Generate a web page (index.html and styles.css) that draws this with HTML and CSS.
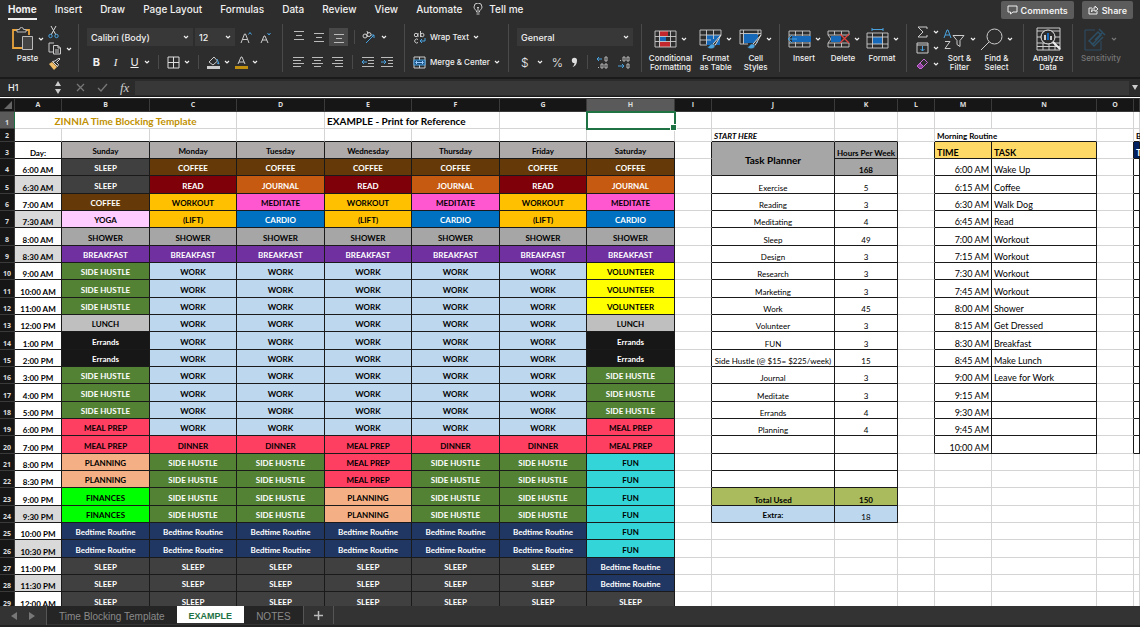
FILE: index.html
```html
<!DOCTYPE html>
<html lang="en">
<head>
  <meta charset="UTF-8">
  <meta name="viewport" content="width=device-width, initial-scale=1.0">
  <title>Time Blocking Template</title>
  <link rel="stylesheet" href="styles.css">
</head>
<body>

  <!-- Shared icons -->
  <svg class="sprite" width="0" height="0">
    <symbol id="chev" viewBox="0 0 6 4"><path d="M1 1l2 2 2-2" fill="none" stroke="currentColor" stroke-width="1.2"/></symbol>
    <symbol id="brush" viewBox="0 0 16 16"><path d="M15 1L7 10l2 1.500z" fill="#2d2d2d" stroke="#ddd"/><path d="M7 10c-3-1-3 3-6 3 3 3 8 2 8-1.500z" fill="#4aa3df" stroke="#2d2d2d" stroke-width=".5"/></symbol>
  </svg>

  <!-- Ribbon tabs -->
  <div class="menu">
    <nav class="menu-tabs">
      <a href="#" class="active">Home</a>
      <a href="#">Insert</a>
      <a href="#">Draw</a>
      <a href="#">Page Layout</a>
      <a href="#">Formulas</a>
      <a href="#">Data</a>
      <a href="#">Review</a>
      <a href="#">View</a>
      <a href="#">Automate</a>
    </nav>
    <button class="tell-me">
      <svg width="10" height="12" viewBox="0 0 10 12" fill="none" stroke="#ddd" stroke-width=".9"><path d="M3.500 9V8C3 7 1 6 1 4a4 4 0 0 1 8 0c0 2-2 3-2.500 4v1zM3.500 11h3M5 8V5M4 4l1 1 1-1"/></svg>
      Tell me
    </button>
    <div class="menu-actions">
      <button><svg width="11" height="10" viewBox="0 0 11 10" fill="none" stroke="#eee"><path d="M1 1h9v6H6L3.500 9V7H1z"/></svg>Comments</button>
      <button><svg width="11" height="10" viewBox="0 0 11 10" fill="none" stroke="#eee"><path d="M4 3H1v6h8V6M3.500 7c0-3 1-4 3.500-4V1l3 3-3 2.500V5C5.500 5 4.500 5 3.500 7z"/></svg>Share</button>
    </div>
  </div>

  <!-- Ribbon -->
  <div class="ribbon">
    <div class="group clipboard">
      <button class="big">
        <span class="icon-row">
          <svg width="23" height="24" viewBox="0 0 23 24" fill="none"><path d="M6 3H2v18h9M15 3h3v5" stroke="#e8a33d" stroke-width="1.800"/><path d="M6 5V2.500h2.500a2 2 0 0 1 4 0H15V5z" stroke="#bbb" fill="#2d2d2d"/><path d="M11.500 9.500h10v13h-10z" fill="#444" stroke="#bbb"/></svg>
          <svg class="chev"><use href="#chev"/></svg>
        </span>
        Paste
      </button>
      <div class="stack">
        <button aria-label="Cut"><svg width="12" height="13" viewBox="0 0 12 13" fill="none"><path d="M3 0l5 9M8 0L3 9" stroke="#ddd"/><circle cx="2.500" cy="10" r="1.700" stroke="#4aa3df"/><circle cx="8.500" cy="10" r="1.700" stroke="#4aa3df"/></svg></button>
        <button aria-label="Copy"><svg width="14" height="13" viewBox="0 0 14 13" fill="#2d2d2d" stroke="#ccc"><path d="M6 1H1v9h5"/><path d="M5.500 3.500H10l2.500 2.500v6h-7zM10 3.500V6h2.500M7 8h4M7 10h4"/></svg><svg class="chev"><use href="#chev"/></svg></button>
        <button aria-label="Format painter"><svg width="13" height="12" viewBox="0 0 13 12"><path d="M1 6l3-2 5 5-3 3z" fill="#efbd68"/><path d="M4.500 3.500l5 5 1-2L8.500 4.500 12 1l-1-1-4 3z" fill="none" stroke="#ddd"/></svg></button>
      </div>
    </div>

    <div class="group rows">
      <div class="row">
        <label class="field font-name"><select aria-label="Font"><option>Calibri (Body)</option></select><svg class="chev"><use href="#chev"/></svg></label>
        <label class="field font-size"><select aria-label="Font size"><option>12</option></select><svg class="chev"><use href="#chev"/></svg></label>
        <button class="grow" aria-label="Increase font size"><svg width="13" height="13" viewBox="0 0 13 13" fill="none" stroke="#ccc"><path d="M1 12L4.500 3h1L9 12M2.500 8.500h5"/><path d="M8.500 3.500l1.500-2 1.500 2" stroke="#4aa3df"/></svg></button>
        <button aria-label="Decrease font size"><svg width="13" height="13" viewBox="0 0 13 13" fill="none" stroke="#ccc"><path d="M2 12l3-7h1l3 7M3 9h5"/><path d="M8.500 2l1.500 2 1.500-2" stroke="#4aa3df"/></svg></button>
      </div>
      <div class="row font-style">
        <button class="letter b">B</button>
        <button class="letter i">I</button>
        <button class="letter u">U</button>
        <svg class="chev"><use href="#chev"/></svg>
        <span class="sep"></span>
        <button aria-label="Borders"><svg width="13" height="13" viewBox="0 0 13 13" fill="none" stroke="#ddd"><path d="M1 1h11v11H1zM6.500 1v11M1 6.500h11"/></svg><svg class="chev"><use href="#chev"/></svg></button>
        <span class="sep"></span>
        <button aria-label="Fill color"><svg width="13" height="13" viewBox="0 0 13 13" fill="none"><path d="M2 6l5-5 3.500 4-4.500 4z" stroke="#ccc"/><path d="M10 3l2 5-2-1" stroke="#4aa3df"/><path d="M0 10h13v3H0z" fill="#ccc"/></svg><svg class="chev"><use href="#chev"/></svg></button>
        <button class="font-color" aria-label="Font color"><svg width="13" height="13" viewBox="0 0 13 13" fill="none"><path d="M3 8l3-7h1l3 7M4 6h5" stroke="#ccc"/><path d="M0 10h13v3H0z" fill="#c08f10"/></svg><svg class="chev"><use href="#chev"/></svg></button>
      </div>
    </div>

    <div class="group rows align">
      <div class="row">
        <button aria-label="Top align"><svg width="12" height="12" viewBox="0 0 12 12" stroke="#bbb"><path d="M1 .5h10M3 4.500h6M1 8.500h10"/></svg></button>
        <button aria-label="Middle align"><svg width="12" height="12" viewBox="0 0 12 12" stroke="#bbb"><path d="M1 2.500h10M3 6.500h6M1 10.500h10"/></svg></button>
        <button class="on" aria-label="Bottom align"><svg width="12" height="12" viewBox="0 0 12 12" stroke="#bbb"><path d="M1 3.500h10M3 7.500h6M1 11.500h10"/></svg></button>
        <span class="sep"></span>
        <button class="wide" aria-label="Orientation"><svg width="14" height="13" viewBox="0 0 14 13" fill="none"><path d="M4 12l8-8M9 4h3v3" stroke="#4aa3df"/><circle cx="3" cy="5" r="2" stroke="#ccc"/><circle cx="7" cy="3.500" r="2" stroke="#ccc"/><path d="M4 3l2 3M5 0l1 3" stroke="#ccc"/></svg><svg class="chev"><use href="#chev"/></svg></button>
      </div>
      <div class="row">
        <button aria-label="Align left"><svg width="12" height="12" viewBox="0 0 12 12" stroke="#bbb"><path d="M1 1.500h11M1 4.500h8M1 7.500h11M1 10.500h8"/></svg></button>
        <button aria-label="Center"><svg width="12" height="12" viewBox="0 0 12 12" stroke="#bbb"><path d="M1 1.500h11M3 4.500h7M1 7.500h11M3 10.500h7"/></svg></button>
        <button aria-label="Align right"><svg width="12" height="12" viewBox="0 0 12 12" stroke="#bbb"><path d="M1 1.500h11M4 4.500h8M1 7.500h11M4 10.500h8"/></svg></button>
        <span class="sep"></span>
        <button aria-label="Decrease indent"><svg width="12" height="12" viewBox="0 0 12 12" fill="none" stroke="#bbb"><path d="M0 1.500h12M6 4.500h6M6 7.500h6M0 10.500h12"/><path d="M5 6H0M2 4L0 6l2 2" stroke="#4aa3df"/></svg></button>
        <button aria-label="Increase indent"><svg width="12" height="12" viewBox="0 0 12 12" fill="none" stroke="#bbb"><path d="M0 1.500h12M7 4.500h5M7 7.500h5M0 10.500h12"/><path d="M0 6h5M3 4l2 2-2 2" stroke="#4aa3df"/></svg></button>
      </div>
    </div>

    <div class="group rows wrap">
      <div class="row"><button><svg width="13" height="13" viewBox="0 0 13 13" fill="none" stroke="#ccc"><circle cx="3" cy="4" r="1.700"/><path d="M5 2v4M7.500 0v6M5 8.500a2 2 0 1 0 0 3"/><circle cx="9.300" cy="4" r="1.700"/><path d="M12 7v3H7M9 8l-2 2 2 2" stroke="#4aa3df"/></svg>Wrap Text<svg class="chev"><use href="#chev"/></svg></button></div>
      <div class="row"><button><svg width="13" height="13" viewBox="0 0 13 13" fill="none"><path d="M1 1h11v11H1zM6.500 1v11" stroke="#ccc"/><path d="M1 4h11v5H1z" fill="#1a4a78" stroke="#4aa3df"/><path d="M3 6.500h7M4 5L2.500 6.500 4 8M9 5l1.500 1.500L9 8" stroke="#9cf"/></svg>Merge &amp; Center<svg class="chev"><use href="#chev"/></svg></button></div>
    </div>

    <div class="group rows number">
      <div class="row">
        <label class="field"><select aria-label="Number format"><option>General</option></select><svg class="chev"><use href="#chev"/></svg></label>
      </div>
      <div class="row">
        <button class="sign">$</button>
        <svg class="chev"><use href="#chev"/></svg>
        <button class="sign">%</button>
        <button class="comma" aria-label="Comma style"><svg width="7" height="11" viewBox="0 0 7 11"><path d="M6 3.500C6 7 4 9.500 1.500 10 3 8.500 3.500 7 3.500 6A2.600 2.600 0 1 1 6 3.500z" fill="#ddd"/></svg></button>
        <span class="sep"></span>
        <button aria-label="Increase decimal"><svg width="13" height="13" viewBox="0 0 13 13" fill="none"><path d="M6 3H1M3 1L1 3l2 2" stroke="#4aa3df"/><path d="M9 1h2v4H9zM5 8h2v4H5zM9 8h2v4H9zM2 11.500h1" stroke="#bbb"/></svg></button>
        <button aria-label="Decrease decimal"><svg width="13" height="13" viewBox="0 0 13 13" fill="none"><path d="M0 10h6M4 8l2 2-2 2" stroke="#4aa3df"/><path d="M5 1h2v4H5zM9 1h2v4H9zM9 8h2v4H9zM2 4.500h1" stroke="#bbb"/></svg></button>
      </div>
    </div>

    <div class="group bigs styles">
      <button class="big">
        <span class="icon-row"><svg width="23" height="18" viewBox="0 0 23 18" fill="none"><path d="M5 1h9v5H5zM5 12h11v5H5z" fill="#c1272d"/><path d="M5 6h7v6H5z" fill="#1668b8"/><path d="M1 1h21v16H1zM1 6.500h21M1 11.500h21M5.500 1v16M16.500 1v16" stroke="#ccc" stroke-width=".9"/></svg><svg class="chev"><use href="#chev"/></svg></span>
        Conditional<br>Formatting
      </button>
      <button class="big">
        <span class="icon-row"><svg width="23" height="20" viewBox="0 0 23 20" fill="none"><path d="M7 6h14v10H7z" fill="#1668b8"/><path d="M22 6V1H1v15h7M1 6h21M1 11h11M7.500 1v14M14.500 1v9" stroke="#ccc" stroke-width=".9"/><use href="#brush" x="7" y="5" width="16" height="16"/></svg><svg class="chev"><use href="#chev"/></svg></span>
        Format<br>as Table
      </button>
      <button class="big">
        <span class="icon-row"><svg width="23" height="20" viewBox="0 0 23 20" fill="none"><path d="M4 5h15v9H4z" fill="#1668b8"/><path d="M22 6V1H1v14h8M1 4.500h21M4.500 1v14M19 1v5" stroke="#ccc" stroke-width=".9"/><use href="#brush" x="7" y="5" width="16" height="16"/></svg><svg class="chev"><use href="#chev"/></svg></span>
        Cell<br>Styles
      </button>
    </div>

    <div class="group bigs cells">
      <button class="big">
        <span class="icon-row"><svg width="23" height="18" viewBox="0 0 23 18" fill="none"><path d="M1 1h21v16H1zM1 5h21M1 13h21M7.500 1v16M14.500 1v16" stroke="#ccc" stroke-width=".9"/><path d="M4 6h19v6H4z" fill="#1668b8"/><path d="M9 9H1M4 5L0 9l4 4" stroke="#4aa3df"/></svg><svg class="chev"><use href="#chev"/></svg></span>
        Insert
      </button>
      <button class="big">
        <span class="icon-row"><svg width="23" height="18" viewBox="0 0 23 18" fill="none"><path d="M22 5V1H1v4h21M1 13h21v4H1v-4M7.500 1v4M14.500 1v4M7.500 13v4M14.500 13v4M1 5l3 4-3 4" stroke="#ccc" stroke-width=".9"/><path d="M4 6h10v6H4z" fill="#1668b8"/><path d="M13 4l9 9M22 4l-9 9" stroke="#e0433f" stroke-width="1.300"/></svg><svg class="chev"><use href="#chev"/></svg></span>
        Delete
      </button>
      <button class="big">
        <span class="icon-row"><svg width="23" height="22" viewBox="0 0 23 22" fill="none"><path d="M6 1.500h11M6 0v3M17 0v3" stroke="#4aa3df"/><path d="M7 9h9v7H7z" fill="#1668b8"/><path d="M1 5h21v15H1zM1 9h21M1 16h21M6.500 5v15M16.500 5v15" stroke="#ccc" stroke-width=".9"/></svg><svg class="chev"><use href="#chev"/></svg></span>
        Format
      </button>
    </div>

    <div class="group editing">
      <div class="stack">
        <button aria-label="AutoSum"><svg width="13" height="12" viewBox="0 0 13 12" fill="none" stroke="#ccc"><path d="M11 3V1H2l5 5-5 5h9V9"/></svg><svg class="chev"><use href="#chev"/></svg></button>
        <button aria-label="Fill"><svg width="13" height="12" viewBox="0 0 13 12" fill="none"><path d="M1 1h11v10H1zM1 3h11" stroke="#ccc"/><path d="M6.500 4v5M4.500 7l2 2 2-2" stroke="#4aa3df"/></svg><svg class="chev"><use href="#chev"/></svg></button>
        <button aria-label="Clear"><svg width="13" height="12" viewBox="0 0 13 12" fill="none" stroke="#c76bd6"><path d="M1 8l7-7 3.500 3.500-6 6H3.500z"/><path d="M4 5l3.500 3.500L5.500 10.500h-2L1 8z" fill="#8e3f9c"/></svg><svg class="chev"><use href="#chev"/></svg></button>
      </div>
      <button class="big">
        <span class="icon-row"><svg width="23" height="22" viewBox="0 0 23 22" fill="none"><path d="M1 10l3-8h1l3 8M2 7h5" stroke="#4aa3df"/><path d="M2 13.500h5L2 20.500h5.500M10 7.500h11l-4 5v6l-3-2v-4z" stroke="#ccc"/></svg><svg class="chev"><use href="#chev"/></svg></span>
        Sort &amp;<br>Filter
      </button>
      <button class="big">
        <span class="icon-row"><svg width="23" height="23" viewBox="0 0 23 23" fill="none" stroke="#ccc"><circle cx="14.500" cy="8.500" r="7.500"/><path d="M9 14l-8 8"/></svg><svg class="chev"><use href="#chev"/></svg></span>
        Find &amp;<br>Select
      </button>
    </div>

    <div class="group bigs analyze">
      <button class="big">
        <span class="icon-row"><svg width="25" height="24" viewBox="0 0 25 24" fill="none"><path d="M1 1h23v22H1zM1 4h23M1 16h23M1 19.500h23M1 10h23M7 16v7M13 16v7M19 16v7" stroke="#ccc"/><circle cx="12" cy="10" r="7" fill="#2d2d2d" stroke="#eee"/><path d="M8 8h2v5H8z" fill="#ccc"/><path d="M11 6h2v7h-2z" fill="#1668b8"/><path d="M14 9h2v4h-2z" fill="#ccc"/><path d="M17 15l7 7" stroke="#eee" stroke-width="2"/></svg></span>
        Analyze<br>Data
      </button>
    </div>

    <div class="group sensitivity">
      <button class="big" disabled>
        <span class="icon-row"><svg width="23" height="24" viewBox="0 0 23 24" fill="none" stroke="#2c4f66"><path d="M11 3H1v20h16V14"/><path d="M5 14l9-9 3 3-8 9zM11 13l8-8M15 2l6 6M7 16l3 3 9-9" stroke-width="1.500"/></svg><svg class="chev"><use href="#chev"/></svg></span>
        Sensitivity
      </button>
    </div>
  </div>

  <!-- Formula bar -->
  <div class="formula-bar">
    <input class="name-box" type="text" value="H1" aria-label="Name box">
    <svg width="6" height="13" viewBox="0 0 6 13" fill="#ccc"><path d="M3 0l3 5H0zM3 13l3-5H0z"/></svg>
    <div class="formula-buttons">
      <button aria-label="Cancel"><svg width="9" height="9" viewBox="0 0 9 9" stroke="#777" stroke-width="1.300"><path d="M1 1l7 7M8 1L1 8"/></svg></button>
      <button aria-label="Enter"><svg width="11" height="9" viewBox="0 0 11 9" fill="none" stroke="#777" stroke-width="1.300"><path d="M1 5l3 3 6-7"/></svg></button>
      <button class="fx">fx</button>
    </div>
    <input class="formula" type="text" aria-label="Formula">
    <button class="expand" aria-label="Expand formula bar"><svg width="6" height="5" viewBox="0 0 6 5" fill="#ccc"><path d="M0 0h6L3 5z"/></svg></button>
  </div>

  <!-- Sheet, filled in by script.js -->
  <div class="sheet">
    <table>
      <colgroup>
        <col class="col-num"><col class="col-a">
        <col class="col-day"><col class="col-day-alt"><col class="col-day"><col class="col-day-alt"><col class="col-day"><col class="col-day-alt"><col class="col-day">
        <col class="col-gap"><col class="col-j"><col class="col-k"><col class="col-gap">
        <col class="col-m"><col class="col-n"><col class="col-gap"><col>
      </colgroup>
      <thead></thead>
      <tbody></tbody>
    </table>
  </div>

  <!-- Sheet tabs -->
  <div class="sheet-tabs">
    <div class="arrows">
      <button aria-label="Previous sheet"><svg width="6" height="8" viewBox="0 0 6 8" fill="#777"><path d="M6 0v8L0 4z"/></svg></button>
      <button aria-label="Next sheet"><svg width="6" height="8" viewBox="0 0 6 8" fill="#777"><path d="M0 0v8l6-4z"/></svg></button>
    </div>
    <button class="sheet-tab">Time Blocking Template</button>
    <button class="sheet-tab active">EXAMPLE</button>
    <button class="sheet-tab">NOTES</button>
    <button class="add" aria-label="Add sheet"><svg width="9" height="9" viewBox="0 0 9 9" stroke="#bbb" stroke-width="1.500"><path d="M4.500 0v9M0 4.500h9"/></svg></button>
  </div>

  <script src="script.js"></script>
</body>
</html>
```
FILE: styles.css
```css
/* Basic styling */
* {
  box-sizing: border-box;
}
body {
  margin: 0;
  height: 100vh;
  display: flex;
  flex-direction: column;
  overflow: hidden;
  background-color: #2d2d2d;
  color: #f0f0f0;
  font-family: Inter, sans-serif;
  font-size: 8px;
}
button, select, input {
  font: inherit;
  color: inherit;
  background: none;
  border: none;
  padding: 0;
  margin: 0;
  outline: none;
}
svg {
  display: block;
  flex: none;
}
.sprite {
  position: absolute;
}
.chev {
  width: 6px;
  height: 4px;
}

/* Ribbon tabs */
.menu {
  display: flex;
  align-items: flex-start;
  height: 21px;
  padding: 0 7px 0 8px;
  font-size: 10px;
  font-weight: 500;
}
.menu-tabs {
  display: flex;
  gap: 18px;
}
.menu-tabs a {
  color: #f0f0f0;
  text-decoration: none;
  line-height: 18px;
  border-bottom: 2px solid transparent;
}
.menu-tabs a.active {
  font-weight: 700;
  border-color: #f0f0f0;
}
.tell-me {
  display: flex;
  align-items: center;
  gap: 6px;
  margin-left: 11px;
  line-height: 18px;
}
.menu-actions {
  display: flex;
  gap: 8px;
  margin-left: auto;
  padding-top: 1px;
}
.menu-actions button {
  display: flex;
  align-items: center;
  gap: 3px;
  height: 18px;
  padding: 0 6px;
  border-radius: 2px;
  background-color: #5c5c5c;
  font-size: 9px;
  font-weight: 600;
}

/* Ribbon */
.ribbon {
  display: grid;
  grid-template-columns: 79px 204px 122px 104px 133px 138px 127px 117px 49px 1fr;
  height: 56px;
  padding: 3px 0 6px;
  flex: none;
}
.group {
  display: flex;
  border-right: 1px solid #4a4a4a;
}
.group:last-child {
  border-right: none;
}
.ribbon button {
  display: flex;
  align-items: center;
  justify-content: center;
}
.ribbon .big {
  flex-direction: column;
  justify-content: flex-start;
  font-size: 8px;
  font-weight: 500;
  line-height: 9px;
}
.icon-row {
  display: flex;
  align-items: center;
  gap: 4px;
  height: 30px;
}
.big:disabled {
  color: #777;
}
.stack {
  display: flex;
  flex-direction: column;
  justify-content: space-between;
  padding: 2px 0;
}
.ribbon .stack button {
  justify-content: flex-start;
  gap: 4px;
}
.rows {
  flex-direction: column;
  justify-content: space-between;
  padding: 4px 8px 1px;
}
.row {
  display: flex;
  align-items: center;
  height: 18px;
}
.sep {
  width: 1px;
  height: 14px;
  background-color: #4a4a4a;
}
.field {
  display: flex;
  align-items: center;
  height: 18px;
  padding: 0 4px;
  background-color: #383838;
  font-size: 9px;
  font-weight: 500;
}
.field select {
  flex: 1;
  min-width: 0;
  appearance: none;
}

.clipboard {
  gap: 4px;
  padding-left: 11px;
}
.font-name {
  width: 106px;
  margin-right: 2px;
}
.font-size {
  width: 40px;
}
.grow {
  margin: 0 6px 0 5px;
}
.font-style button {
  gap: 4px;
}
.letter {
  width: 19px;
  font-size: 11px;
}
.font-style .sep {
  margin: 0 8px;
}
.font-color {
  margin-left: 5px;
}
.b {
  font-weight: 700;
}
.i {
  font-family: "Liberation Serif", serif;
  font-style: italic;
}
.u {
  text-decoration: underline;
}
.align {
  padding-left: 6px;
}
.align .row {
  gap: 1px;
}
.align button {
  width: 19px;
  height: 18px;
}
.align .sep {
  margin: 0 5px;
}
.align .on {
  background-color: #484848;
}
.align .wide {
  width: 26px;
  gap: 5px;
}
.wrap button {
  gap: 4px;
  font-weight: 500;
}
.number .field {
  width: 100%;
}
.number .row:last-child {
  justify-content: space-between;
  padding: 0 2px 0 4px;
}
.sign {
  font-size: 12px;
  font-weight: 300;
}
.bigs {
  justify-content: center;
  gap: 7px;
}
.cells {
  gap: 6px;
}
.editing {
  gap: 4px;
  padding-left: 9px;
}
.sensitivity {
  padding-left: 8px;
}

/* Formula bar */
.formula-bar {
  display: flex;
  align-items: center;
  flex: none;
  height: 20px;
  border-top: 2px solid #1a1a1a;
  border-bottom: 1px solid #1a1a1a;
  background-color: #2b2b2b;
}
.name-box {
  width: 55px;
  padding-left: 8px;
  font-size: 9px;
  font-weight: 500;
}
.formula-buttons {
  display: flex;
  align-items: center;
  gap: 12px;
  padding: 0 6px 0 15px;
}
.fx {
  font-family: "Liberation Serif", serif;
  font-size: 13px;
  font-style: italic;
  color: #ccc;
}
.formula {
  flex: 1;
  height: 14px;
  background-color: #383838;
}
.expand {
  display: flex;
  justify-content: center;
  width: 11px;
}

/* Sheet */
.sheet {
  flex: 1;
  min-height: 0;
  overflow: hidden;
  background-color: #fff;
  border-top: 1px solid #fff;
  color: #000;
  font-family: Lato, sans-serif;
}
table {
  width: 100%;
  min-width: 1140px;
  table-layout: fixed;
  border-collapse: separate;
  border-spacing: 0;
  border-top: 1px solid #333;
}
.col-num { width: 15px; }
.col-a { width: 47px; }
.col-day { width: 88px; }
.col-day-alt { width: 87px; }
.col-gap { width: 37px; }
.col-j { width: 123px; }
.col-k { width: 63px; }
.col-m { width: 57px; }
.col-n { width: 105px; }

th, td {
  padding: 0 2px;
  white-space: nowrap;
  font-size: 8px;
  line-height: 10px;
  font-weight: 700;
  text-align: center;
  vertical-align: bottom;
  border-right: 1px solid #d4d4d4;
  border-bottom: 1px solid #d4d4d4;
}
tr {
  height: 17px;
}
tbody tr:nth-child(3n+5) {
  height: 18px;
}
thead tr, tbody .row-2 {
  height: 13px;
}
th {
  background-color: #161616;
  color: #ddd;
  font-family: "Open Sans", sans-serif;
  font-size: 7px;
  border-color: #3a3a3a;
}
thead th {
  vertical-align: middle;
}
tbody th {
  padding: 0 1px;
}
thead .selected, tbody .selected {
  background-color: #5a5a5a;
}
tbody .selected {
  border-right-color: #1f7244;
}
.corner svg {
  margin-left: auto;
}

/* Cell kinds */
.box {
  border-color: #1a1a1a;
}
.line-right {
  border-right-color: #1a1a1a;
}
.line-bottom {
  border-bottom-color: #1a1a1a;
}
.left {
  text-align: left;
}
.right {
  text-align: right;
}
.middle, .title {
  padding-top: 2px;
  vertical-align: middle;
}
.plain {
  font-weight: 400;
}
.title, .planner {
  font-size: 10px;
}
.gold {
  color: #bf9000;
}
.cursor {
  position: relative;
  outline: 2px solid #1f7244;
  outline-offset: -1px;
}
.cursor::after {
  content: "";
  position: absolute;
  right: -3px;
  bottom: -3px;
  width: 5px;
  height: 5px;
  background-color: #1f7244;
  border: 1px solid #fff;
}
.routine {
  font-size: 9px;
}
.shade { background-color: #d9d9d9; }
.day-head { background-color: #aeaaaa; }
.grey { background-color: #a6a6a6; }
.yellow { background-color: #ffd966; }
.olive { background-color: #a9bb5c; }
.pale { background-color: #bdd7ee; }
.navy { background-color: #002060; color: #fff; }

/* Activities */
.sleep { background-color: #404040; color: #fff; }
.coffee { background-color: #663a08; color: #fff; }
.read { background-color: #80000a; color: #fff; }
.journal { background-color: #c65a11; color: #fff; }
.workout, .lift { background-color: #ffc000; }
.meditate { background-color: #ff57cf; }
.yoga { background-color: #ffccff; }
.cardio { background-color: #0070c0; color: #fff; }
.shower { background-color: #a6a6a6; }
.breakfast { background-color: #7030a0; color: #fff; }
.side-hustle { background-color: #548235; color: #fff; }
.work { background-color: #bdd7ee; }
.volunteer { background-color: #ffff00; }
.lunch { background-color: #bfbfbf; }
.errands { background-color: #171717; color: #fff; }
.meal-prep, .dinner { background-color: #ff3f62; }
.planning { background-color: #f4b084; }
.finances { background-color: #00ff00; }
.fun { background-color: #33d5d8; }
.bedtime-routine { background-color: #203764; color: #fff; }

/* Sheet tabs */
.sheet-tabs {
  display: flex;
  align-items: flex-start;
  flex: none;
  height: 21px;
  background-color: #333;
  border-bottom: 2px solid #222;
}
.arrows {
  display: flex;
  gap: 12px;
  height: 19px;
  padding: 0 11px;
  border-right: 1px solid #555;
}
.sheet-tab {
  height: 18px;
  padding: 2px 12px 0;
  background-color: #252525;
  color: #8a8a8a;
  font-family: "Liberation Sans", sans-serif;
  font-size: 10px;
}
.sheet-tab.active {
  height: 17px;
  background-color: #fff;
  color: #1f7244;
  font-size: 9px;
  font-weight: 700;
}
.add {
  display: flex;
  align-items: center;
  height: 18px;
  padding: 0 10px;
  border-left: 1px solid #555;
  border-right: 1px solid #555;
}
```
FILE: script.js
```js
const days = ["Sunday", "Monday", "Tuesday", "Wednesday", "Thursday", "Friday", "Saturday"];

const times = [
  "6:00 AM", "6:30 AM", "7:00 AM", "7:30 AM", "8:00 AM", "8:30 AM", "9:00 AM", "10:00 AM", "11:00 AM",
  "12:00 PM", "1:00 PM", "2:00 PM", "3:00 PM", "4:00 PM", "5:00 PM", "6:00 PM", "7:00 PM", "8:00 PM",
  "8:30 PM", "9:00 PM", "9:30 PM", "10:00 PM", "10:30 PM", "11:00 PM", "11:30 PM", "12:00 AM"
];
const shaded = ["6:30 AM", "7:30 AM", "8:30 AM", "9:30 PM", "10:30 PM", "11:30 PM"];

// Sunday, Monday - Friday, Saturday
const work = (sunday, saturday) => [sunday, "WORK", "WORK", "WORK", "WORK", "WORK", saturday];
const all = (name, saturday) => [name, name, name, name, name, name, saturday || name];

const schedule = [
  ["SLEEP", "COFFEE", "COFFEE", "COFFEE", "COFFEE", "COFFEE", "COFFEE"],
  ["SLEEP", "READ", "JOURNAL", "READ", "JOURNAL", "READ", "JOURNAL"],
  ["COFFEE", "WORKOUT", "MEDITATE", "WORKOUT", "MEDITATE", "WORKOUT", "MEDITATE"],
  ["YOGA", "(LIFT)", "CARDIO", "(LIFT)", "CARDIO", "(LIFT)", "CARDIO"],
  all("SHOWER"),
  all("BREAKFAST"),
  work("SIDE HUSTLE", "VOLUNTEER"),
  work("SIDE HUSTLE", "VOLUNTEER"),
  work("SIDE HUSTLE", "VOLUNTEER"),
  work("LUNCH", "LUNCH"),
  work("Errands", "Errands"),
  work("Errands", "Errands"),
  work("SIDE HUSTLE", "SIDE HUSTLE"),
  work("SIDE HUSTLE", "SIDE HUSTLE"),
  work("SIDE HUSTLE", "SIDE HUSTLE"),
  work("MEAL PREP", "MEAL PREP"),
  ["MEAL PREP", "DINNER", "DINNER", "MEAL PREP", "DINNER", "DINNER", "MEAL PREP"],
  ["PLANNING", "SIDE HUSTLE", "SIDE HUSTLE", "MEAL PREP", "SIDE HUSTLE", "SIDE HUSTLE", "FUN"],
  ["PLANNING", "SIDE HUSTLE", "SIDE HUSTLE", "MEAL PREP", "SIDE HUSTLE", "SIDE HUSTLE", "FUN"],
  ["FINANCES", "SIDE HUSTLE", "SIDE HUSTLE", "PLANNING", "SIDE HUSTLE", "SIDE HUSTLE", "FUN"],
  ["FINANCES", "SIDE HUSTLE", "SIDE HUSTLE", "PLANNING", "SIDE HUSTLE", "SIDE HUSTLE", "FUN"],
  all("Bedtime Routine", "FUN"),
  all("Bedtime Routine", "FUN"),
  all("SLEEP", "Bedtime Routine"),
  all("SLEEP", "Bedtime Routine"),
  all("SLEEP")
];

const tasks = [
  ["Exercise", 5], ["Reading", 3], ["Meditating", 4], ["Sleep", 49], ["Design", 3], ["Research", 3],
  ["Marketing", 3], ["Work", 45], ["Volunteer", 3], ["FUN", 3], ["Side Hustle (@ $15= $225/week)", 15],
  ["Journal", 3], ["Meditate", 3], ["Errands", 4], ["Planning", 4], ["", ""], ["", ""], ["", ""]
];

const morning = [
  ["6:00 AM", "Wake Up"], ["6:15 AM", "Coffee"], ["6:30 AM", "Walk Dog"], ["6:45 AM", "Read"],
  ["7:00 AM", "Workout"], ["7:15 AM", "Workout"], ["7:30 AM", "Workout"], ["7:45 AM", "Workout"],
  ["8:00 AM", "Shower"], ["8:15 AM", "Get Dressed"], ["8:30 AM", "Breakfast"], ["8:45 AM", "Make Lunch"],
  ["9:00 AM", "Leave for Work"], ["9:15 AM", ""], ["9:30 AM", ""], ["9:45 AM", ""], ["10:00 AM", ""]
];

function cell(text, classes, attrs) {
  return `<td class="${classes || ""}" ${attrs || ""}>${text}</td>`;
}

function activity(name) {
  const kind = name.toLowerCase().replace(/[()]/g, "").replace(" ", "-");
  return cell(name, "box middle " + kind);
}

// Columns J and K
function plannerCells(row) {
  if (row === 3) return cell("Task Planner", "box middle planner grey", 'rowspan="2"') + cell("Hours Per Week", "box grey");
  if (row === 4) return cell("168", "box grey");
  if (row < 23) return cell(tasks[row - 5][0], "box plain") + cell(tasks[row - 5][1], "box plain");
  if (row === 23) return cell("Total Used", "box olive") + cell("150", "box olive");
  if (row === 24) return cell("Extra:", "box middle pale") + cell("18", "box plain pale");
  return cell("") + cell("");
}

// Columns M to P
function routineCells(row) {
  if (row === 3) {
    return cell("TIME", "box left routine yellow") + cell("TASK", "box left routine yellow") +
      cell("", "line-right") + cell("TIME", "box left routine navy");
  }
  if (row <= 20) {
    const [time, task] = morning[row - 4];
    return cell(time, "box right plain routine") + cell(task, "box left plain routine") +
      cell("", "line-right") + cell("", "box");
  }
  return cell("").repeat(4);
}

function buildRow(row) {
  let html = `<th>${row}</th>`;
  if (row === 3) {
    html += cell("Day:", "box") + days.map(day => cell(day, "box middle day-head")).join("");
  } else {
    const time = times[row - 4];
    html += cell(time, shaded.includes(time) ? "box shade" : "box") + schedule[row - 4].map(activity).join("");
  }
  html += cell("", row <= 24 ? "line-right" : "");
  html += plannerCells(row);
  html += cell("", row <= 20 ? "line-right" : "");
  html += routineCells(row);
  return `<tr>${html}</tr>`;
}

const corner = '<th class="corner"><svg width="8" height="8" viewBox="0 0 8 8"><path d="M8 0v8H0z" fill="#666"/></svg></th>';
document.querySelector("thead").innerHTML = "<tr>" + corner +
  [..."ABCDEFGHIJKLMNO"].map(c => `<th class="${c === "H" ? "selected" : ""}">${c}</th>`).join("") + "<th></th></tr>";

let body = '<tr><th class="selected">1</th>' +
  cell("ZINNIA Time Blocking Template", "title gold", 'colspan="3"') + cell("") +
  cell("EXAMPLE - Print for Reference", "title left", 'colspan="2"') + cell("") +
  cell("", "cursor") + cell("").repeat(8) + "</tr>";

body += '<tr class="row-2"><th>2</th>' + cell("", "line-bottom").repeat(8) + cell("") +
  cell("<i>START HERE</i>", "left line-bottom") + cell("", "line-bottom") + cell("") +
  cell("Morning Routine", "left line-bottom", 'colspan="2"') + cell("") +
  cell("Bedtime Routine", "left line-bottom") + "</tr>";

for (let row = 3; row <= 29; row++) {
  body += buildRow(row);
}
document.querySelector("tbody").innerHTML = body;
```
